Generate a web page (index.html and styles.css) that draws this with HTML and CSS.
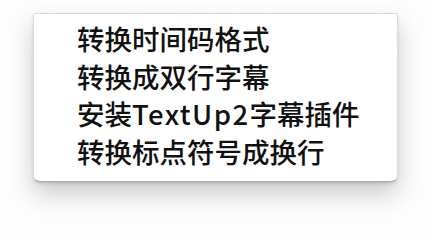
FILE: index.html
```html
<!DOCTYPE html>
<html lang="zh">
<head>
<meta charset="utf-8">
<link rel="stylesheet" href="styles.css">
</head>
<body>
<div class="menu">
  <div class="item">转换时间码格式</div>
  <div class="item">转换成双行字幕</div>
  <div class="item">安装<span class="latin">TextUp2</span>字幕插件</div>
  <div class="item">转换标点符号成换行</div>
</div>
</body>
</html>
```
FILE: styles.css
```css
html, body {
  margin: 0;
  padding: 0;
  background: #fdfdfd;
}
body {
  width: 432px;
  height: 236px;
  overflow: hidden;
  padding: 13px 0 0 33px;
  box-sizing: border-box;
}
.menu {
  width: 365px;
  height: 169px;
  box-sizing: border-box;
  background: #fff;
  border: 1px solid #dcdcdc;
  border-bottom-color: #a9a9a9;
  border-radius: 2px 2px 7px 7px;
  box-shadow: 0 12px 24px rgba(0, 0, 0, 0.2), 0 2px 3px rgba(0, 0, 0, 0.12);
  padding: 6px 0 0 43px;
  font-family: "Noto Sans CJK SC", "Noto Sans", sans-serif;
  font-size: 27.5px;
  font-weight: 500;
  line-height: 37.7px;
  color: #111;
}
.item {
  white-space: nowrap;
}
.latin {
  letter-spacing: 1.4px;
}
```
